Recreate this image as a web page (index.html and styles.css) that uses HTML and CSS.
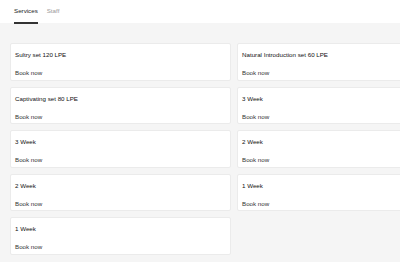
FILE: index.html
```html
<!DOCTYPE html>
<html lang="en">
<head>
    <meta charset="UTF-8">
    <meta name="viewport" content="width=device-width, initial-scale=1.0">
    <title>Book a service</title>
    <link rel="stylesheet" href="styles.css">
</head>
<body>
    <header class="tabs">
        <a class="tab active" href="#">Services</a>
        <a class="tab" href="#">Staff</a>
    </header>
    <div class="page">
        <main class="services">
            <div class="card">
                <div class="card-title">Sultry set 120 LPE</div>
                <a class="book" href="#">Book now</a>
            </div>
            <div class="card">
                <div class="card-title">Natural Introduction set 60 LPE</div>
                <a class="book" href="#">Book now</a>
            </div>
            <div class="card">
                <div class="card-title">Captivating set 80 LPE</div>
                <a class="book" href="#">Book now</a>
            </div>
            <div class="card">
                <div class="card-title">3 Week</div>
                <a class="book" href="#">Book now</a>
            </div>
            <div class="card">
                <div class="card-title">3 Week</div>
                <a class="book" href="#">Book now</a>
            </div>
            <div class="card">
                <div class="card-title">2 Week</div>
                <a class="book" href="#">Book now</a>
            </div>
            <div class="card">
                <div class="card-title">2 Week</div>
                <a class="book" href="#">Book now</a>
            </div>
            <div class="card">
                <div class="card-title">1 Week</div>
                <a class="book" href="#">Book now</a>
            </div>
            <div class="card">
                <div class="card-title">1 Week</div>
                <a class="book" href="#">Book now</a>
            </div>
        </main>
    </div>
</body>
</html>
```

FILE: styles.css
```css
html, body {
    margin: 0;
    padding: 0;
}
body {
    font-family: "Liberation Sans", Arial, sans-serif;
    font-size: 6.2px;
    color: #222;
    background-color: #f5f5f5;
    overflow: hidden;
    width: 400px;
    height: 262px;
}
.tabs {
    background-color: #fff;
    height: 23px;
    display: flex;
    gap: 9px;
    padding-left: 14px;
}
.tab {
    display: block;
    line-height: 22px;
    color: #999;
    text-decoration: none;
    border-bottom: 2px solid transparent;
    height: 22px;
}
.tab.active {
    color: #222;
    border-bottom-color: #333;
}
.page {
    overflow: hidden;
}
.services {
    display: grid;
    grid-template-columns: 221px 221px;
    gap: 6px;
    padding: 20px 10px;
    width: 448px;
}
.card {
    background-color: #fff;
    border: 1px solid #ebebeb;
    border-radius: 2px;
    height: 37.5px;
    box-sizing: border-box;
    padding: 7px 4px 0;
}
.card-title {
    color: #111;
    line-height: 8px;
}
.book {
    display: block;
    margin-top: 10px;
    line-height: 8px;
    color: #333;
    text-decoration: none;
}
```
